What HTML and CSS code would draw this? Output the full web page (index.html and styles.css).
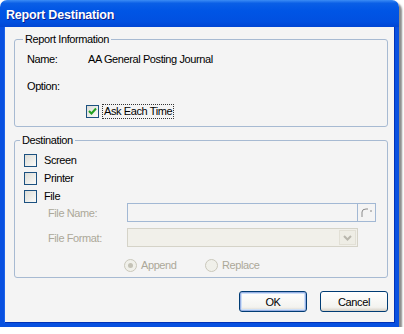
FILE: index.html
```html
<!DOCTYPE html>
<html lang="en">
<head>
    <meta charset="UTF-8">
    <title>Report Destination</title>
    <link rel="stylesheet" href="styles.css">
</head>
<body>

<div class="window">
    <div class="titlebar">Report Destination</div>
    <div class="client">

        <!-- Report information group -->
        <fieldset class="group info">
            <legend>Report Information</legend>
            <div class="row">
                <span class="label">Name:</span>
                <span class="value">AA General Posting Journal</span>
            </div>
            <div class="row">
                <span class="label">Option:</span>
            </div>
            <div class="row ask">
                <span class="check checked">
                    <svg width="9" height="9" viewBox="0 0 9 9"><path d="M1 4 L3.5 6.5 L8 1.5" fill="none" stroke="#21a121" stroke-width="2"/></svg>
                </span>
                <span class="focus">Ask Each Time</span>
            </div>
        </fieldset>

        <!-- Destination group -->
        <fieldset class="group dest">
            <legend>Destination</legend>
            <div class="option first"><span class="check"></span>Screen</div>
            <div class="option"><span class="check"></span>Printer</div>
            <div class="option"><span class="check"></span>File</div>

            <div class="field name">
                <span class="field-label">File Name:</span>
                <div class="input">
                    <span class="browse">
                        <svg width="12" height="10" viewBox="0 0 12 10"><path d="M1 9 L1 4 Q1 1 5 1 L7 1" fill="none" stroke="#8a8a8a" stroke-width="1"/><path d="M9 3 L11 3" stroke="#8a8a8a" stroke-width="1"/></svg>
                    </span>
                </div>
            </div>
            <div class="field format">
                <span class="field-label">File Format:</span>
                <div class="select">
                    <span class="arrow">
                        <svg width="9" height="6" viewBox="0 0 9 6"><path d="M1 1 L4.5 4.5 L8 1" fill="none" stroke="#b9b7ad" stroke-width="2"/></svg>
                    </span>
                </div>
            </div>
            <div class="radios">
                <span class="radio on"><span class="dot"></span></span><span class="radio-label">Append</span>
                <span class="radio"></span><span class="radio-label">Replace</span>
            </div>
        </fieldset>

        <div class="buttons">
            <button class="btn default">OK</button>
            <button class="btn">Cancel</button>
        </div>
    </div>
</div>

</body>
</html>
```

FILE: styles.css
```css
body {
    margin: 0;
    padding: 0;
    background-color: #ffffff;
    font-family: 'Liberation Sans', Arial, sans-serif;
    font-size: 11px;
    letter-spacing: -0.4px;
    color: #000;
}

/* Dialog frame */
.window {
    width: 399px;
    height: 327px;
    box-sizing: border-box;
    display: flex;
    flex-direction: column;
    box-shadow: 3px 3px 2px #8c8c8c;
    border-radius: 7px 7px 0 0;
}

.titlebar {
    height: 27px;
    padding-left: 6px;
    line-height: 30px;
    color: #fff;
    font-weight: bold;
    font-size: 12.5px;
    letter-spacing: -0.2px;
    text-shadow: 1px 1px 0 #0a1e8c;
    background: linear-gradient(#3b8cf5 0%, #0a5fe6 12%, #0055e5 40%, #0150e0 80%, #0146d4 100%);
    border-radius: 7px 7px 0 0;
}

.client {
    flex: 1;
    background-color: #f4f4f4;
    border: 4px solid #0850e0;
    border-top: none;
    box-shadow: inset 1px 0 0 #1a62ea, inset -1px 0 0 #0132b8, inset 0 -1px 0 #0132b8;
    padding: 6px 7px 0 6px;
    display: flex;
    flex-direction: column;
}

/* Group boxes */
.group {
    margin: 0 0 0 4px;
    width: 374px;
    box-sizing: border-box;
    border: 1px solid #a7bad2;
    border-radius: 3px;
    padding: 0 0 0 12px;
}

.group legend {
    padding: 0 2px;
    margin-left: -4px;
}

.info {
    height: 94px;
}

.row {
    display: flex;
    height: 27px;
    align-items: center;
}

.label {
    width: 61px;
}

.ask {
    padding-left: 59px;
    margin-top: 2px;
    height: 20px;
}

.focus {
    outline: 1px dotted #333;
    padding: 0 1px;
    margin-left: 4px;
    line-height: 13px;
}

.check {
    width: 11px;
    height: 11px;
    border: 1px solid #1c5180;
    background: linear-gradient(135deg, #dcdcd6, #fbfbf9);
    display: inline-flex;
    align-items: center;
    justify-content: center;
    flex-shrink: 0;
}

.dest {
    margin-top: 7px;
    height: 144px;
    padding-left: 9px;
}

.option {
    display: flex;
    align-items: center;
    height: 18px;
}

.option .check {
    margin-right: 7px;
}

.option.first {
    margin-top: 5px;
}

/* Disabled file fields */
.field {
    display: flex;
    align-items: center;
    color: #aca899;
}

.field.name {
    margin-top: -2px;
}

.field.format {
    margin-top: 6px;
}

.field-label {
    width: 79px;
    padding-left: 24px;
}

.input {
    width: 249px;
    height: 19px;
    box-sizing: border-box;
    border: 1px solid #a2b8d4;
    background: #f4f4f4;
    display: flex;
    justify-content: flex-end;
}

.browse {
    width: 17px;
    border-left: 1px solid #a2b8d4;
    display: flex;
    align-items: center;
    justify-content: center;
}

.select {
    width: 231px;
    height: 19px;
    box-sizing: border-box;
    border: 1px solid #d5d3c8;
    background: #f1f0ea;
    display: flex;
    justify-content: flex-end;
    padding: 1px;
}

.arrow {
    width: 15px;
    background: #eeede5;
    border: 1px solid #e2e0d6;
    display: flex;
    align-items: center;
    justify-content: center;
}

.radios {
    display: flex;
    align-items: center;
    height: 26px;
    margin-top: 5px;
    padding-left: 100px;
    color: #aca899;
}

.radio {
    width: 11px;
    height: 11px;
    border: 1px solid #cac8bb;
    border-radius: 50%;
    background: #f0f0ea;
    display: inline-flex;
    align-items: center;
    justify-content: center;
}

.radio .dot {
    width: 5px;
    height: 5px;
    border-radius: 50%;
    background: #c4c2b6;
}

.radio-label {
    margin-left: 4px;
    width: 64px;
}

/* Buttons */
.buttons {
    display: flex;
    justify-content: flex-end;
    gap: 13px;
    padding-top: 13px;
}

.btn {
    width: 68px;
    height: 21px;
    font-family: inherit;
    font-size: 11px;
    letter-spacing: -0.4px;
    border: 1px solid #003c74;
    border-radius: 3px;
    background: linear-gradient(#ffffff, #f3f3ef 80%, #d6d0c5);
    padding: 0;
    color: #000;
}

.btn.default {
    box-shadow: inset 0 0 0 1px #97aee2, inset 0 0 0 2px #cde0f8;
}
```
